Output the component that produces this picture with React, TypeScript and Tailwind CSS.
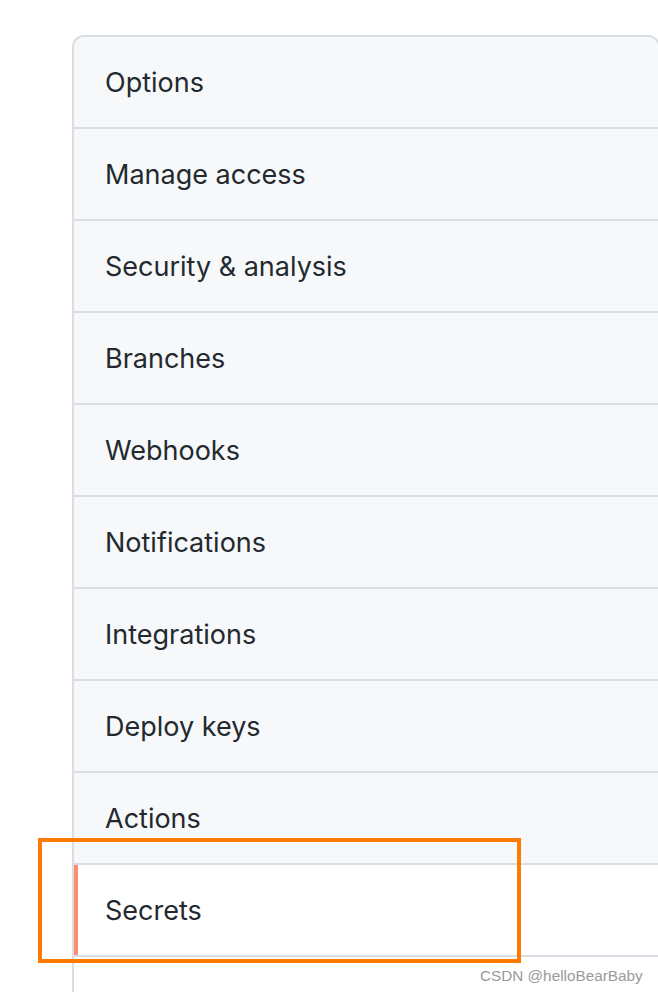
const ITEMS = [
  "Options",
  "Manage access",
  "Security & analysis",
  "Branches",
  "Webhooks",
  "Notifications",
  "Integrations",
  "Deploy keys",
  "Actions",
];

export default function App() {
  return (
    <div
      className="relative h-[992px] w-[658px] overflow-hidden bg-white"
      style={{ fontFamily: "Inter, 'Noto Sans', sans-serif" }}
    >
      <div className="pt-[35px] pl-[72px]">
        <nav className="w-[588px] rounded-tl-[12px] rounded-tr-[12px] border-2 border-b-0 border-[#d8dee4]">
          {ITEMS.map((label, i) => (
            <div
              key={label}
              className={`flex h-[92px] items-center border-b-2 border-[#d8dee4] bg-[#f6f8fa] pl-[31px] pt-[3px] text-[27px] text-[#24292f] ${
                i === 0 ? "rounded-tl-[10px] rounded-tr-[10px]" : ""
              }`}
            >
              {label}
            </div>
          ))}
          {/* selected item */}
          <div className="relative flex h-[92px] items-center border-b-2 border-[#d8dee4] bg-white pl-[31px] pt-[3px] text-[27px] text-[#24292f]">
            <span className="absolute left-0 top-0 h-[90px] w-[4px] bg-[#fd8c73]" />
            Secrets
          </div>
          <div className="h-[60px] bg-white" />
        </nav>
      </div>

      {/* annotation box */}
      <div className="absolute left-[38px] top-[838px] h-[125px] w-[483px] border-4 border-[#ff7a00]" />

      <div
        className="absolute left-[480px] top-[965px] text-[15.3px] text-[#9a9a9a]"
        style={{ fontFamily: "'Liberation Sans', Arial, sans-serif", textShadow: "0 0 1px #fff" }}
      >
        CSDN @helloBearBaby
      </div>
    </div>
  );
}
